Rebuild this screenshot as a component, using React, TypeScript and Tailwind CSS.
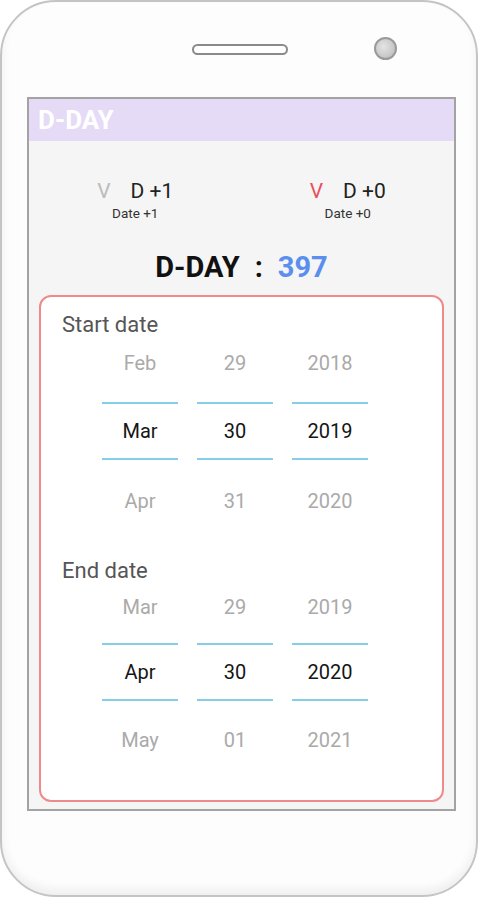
import React from 'react';

type Col = { top: string; mid: string; bottom: string };

const start: Col[] = [
  { top: 'Feb', mid: 'Mar', bottom: 'Apr' },
  { top: '29', mid: '30', bottom: '31' },
  { top: '2018', mid: '2019', bottom: '2020' },
];

const end: Col[] = [
  { top: 'Mar', mid: 'Apr', bottom: 'May' },
  { top: '29', mid: '30', bottom: '01' },
  { top: '2019', mid: '2020', bottom: '2021' },
];

function Picker({ cols, gapTop, gapBottom }: { cols: Col[]; gapTop: string; gapBottom: string }) {
  return (
    <div className="flex gap-[19px] pl-[61px]">
      {cols.map((c, i) => (
        <div key={i} className="flex w-[76px] flex-col items-center text-[20px]">
          <div className="flex h-9 items-center text-[#aaaaaa]">{c.top}</div>
          <div className={`${gapTop} flex h-[58px] w-full items-center justify-center border-y-2 border-[#86cde8] text-[#151515]`}>
            {c.mid}
          </div>
          <div className={`${gapBottom} flex h-9 items-center text-[#aaaaaa]`}>{c.bottom}</div>
        </div>
      ))}
    </div>
  );
}

function Toggle({ on, label, sub }: { on: boolean; label: string; sub: string }) {
  return (
    <div className="flex flex-1 flex-col items-center">
      <div className="flex items-center text-[21px] leading-6">
        <span className={on ? 'mr-[20px] text-[#e8505b]' : 'mr-[20px] text-[#bbbbbb]'}>V</span>
        <span className="text-[#222]">{label}</span>
      </div>
      <div className="mt-[2px] text-[13.5px] leading-4 text-[#333]">{sub}</div>
    </div>
  );
}

export default function App() {
  return (
    <div className="h-[900px] w-[480px] bg-white" style={{ fontFamily: 'Roboto, "Noto Sans", sans-serif' }}>
      <div className="relative flex h-[897px] w-[478px] flex-col items-start rounded-[56px] border-2 border-[#c4c4c4] bg-[#fdfdfd] shadow-[inset_0_-6px_10px_rgba(0,0,0,0.06)]">
        {/* speaker + camera */}
        <div className="absolute left-[190px] top-[42px] h-[11px] w-[96px] rounded-full border-2 border-[#8a8a8a] bg-white" />
        <div className="absolute left-[372px] top-[35px] h-[23px] w-[23px] rounded-full border-2 border-[#9a9a9a] bg-[radial-gradient(circle_at_40%_40%,#e4e4e4,#b8b8b8)]" />

        {/* screen */}
        <div className="ml-[25px] mt-[95px] flex h-[714px] w-[429px] flex-col border-2 border-[#a3a3a3] bg-[#f5f5f5]">
          <div className="flex h-[42px] items-center bg-[#e6dbf6] pl-[9px] text-[26px] font-bold text-white">D-DAY</div>

          <div className="mt-[38px] flex">
            <Toggle on={false} label="D +1" sub="Date +1" />
            <Toggle on={true} label="D +0" sub="Date +0" />
          </div>

          <div className="mt-[30px] flex justify-center text-[29px] font-bold leading-8">
            <span className="text-[#111]">D-DAY</span>
            <span className="mx-[15px] text-[#111]">:</span>
            <span className="text-[#5a8fef]">397</span>
          </div>

          <div className="mx-[10px] mt-[12px] flex flex-1 flex-col rounded-[12px] border-2 border-[#f08a8a] bg-white pt-[14px]">
            <div className="pl-[21px] text-[22px] leading-7 text-[#555]">Start date</div>
            <div className="mt-[6px]">
              <Picker cols={start} gapTop="mt-[21px]" gapBottom="mt-[23px]" />
            </div>
            <div className="mt-[38px] pl-[21px] text-[22px] leading-7 text-[#555]">End date</div>
            <div className="mt-[4px]">
              <Picker cols={end} gapTop="mt-[18px]" gapBottom="mt-[21px]" />
            </div>
          </div>
          <div className="h-[7px]" />
        </div>
      </div>
    </div>
  );
}
